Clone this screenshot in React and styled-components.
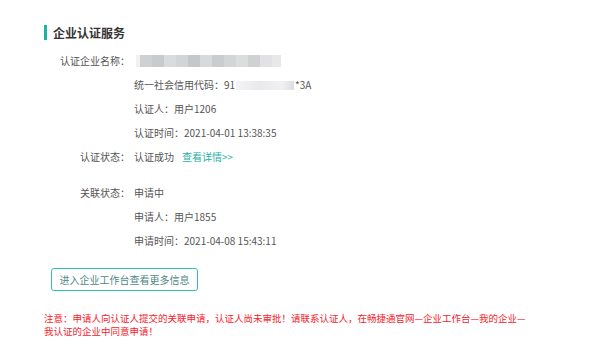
import React from 'react';
import styled, { createGlobalStyle } from 'styled-components';

const GlobalStyle = createGlobalStyle`
body {
  margin: 0;
  background: #fff;
  font-family: "Noto Sans CJK SC", "Noto Sans", sans-serif;
}
`;

const Page = styled.div`
padding: 24px 0 0 44px;
width: 545px;
height: 324px;
background: #fff;
`;

const Title = styled.div`
display: flex;
align-items: center;
height: 16px;
font-size: 12px;
font-weight: bold;
color: #333;
&::before {
  content: "";
  width: 3px;
  height: 15px;
  margin-right: 6px;
  background-color: #1ab3a5;
}
`;

const InfoList = styled.div`
margin-top: 9px;
`;

const Row = styled.div`
display: grid;
grid-template-columns: 86px auto;
column-gap: 4px;
height: 24px;
line-height: 24px;
font-size: 10px;
color: #555;
margin-top: ${(p) => (p.gap ? '12px' : '0')};
`;

const Label = styled.div`
text-align: right;
white-space: nowrap;
`;

const Value = styled.div`
display: flex;
align-items: center;
white-space: nowrap;
`;

const BlurName = styled.span`
display: inline-block;
width: 145px;
height: 12px;
margin-left: 2px;
background: linear-gradient(to right,
  #f1f1f2 0 4px, #cfd0d1 4px 16px, #c9cacb 16px 28px, #dadbdc 28px 40px,
  #d3d4d5 40px 52px, #c5c7c8 52px 64px, #d8d9da 64px 76px, #cbcccd 76px 88px,
  #d4d5d6 88px 100px, #dcdddd 100px 112px, #d0d1d2 112px 124px,
  #e2e2e4 124px 136px, #e8e8ea 136px 145px);
`;

const BlurCode = styled.span`
display: inline-block;
width: 58px;
height: 9px;
margin: 0 1px;
background: linear-gradient(to right, #f4f4f6, #e9e9ec 40%, #f0f0f2 80%, #dcdce0);
`;

const Link = styled.a`
margin-left: 8px;
color: #1ab3a5;
text-decoration: none;
cursor: pointer;
`;

const Button = styled.button`
display: block;
margin: 15px 0 0 7px;
width: 147px;
height: 23px;
padding: 0;
border: 1px solid #2fc2b4;
border-radius: 3px;
background: #fff;
color: #4d8884;
font-family: inherit;
font-size: 10px;
cursor: pointer;
`;

const Notice = styled.p`
margin: 21px 0 0 0;
width: 490px;
font-size: 9.5px;
line-height: 13px;
color: #f5222d;
`;

const App = () => {
	return (
		<Page>
			<GlobalStyle />
			<Title>企业认证服务</Title>
			<InfoList>
				<Row>
					<Label>认证企业名称：</Label>
					<Value><BlurName /></Value>
				</Row>
				<Row>
					<div />
					<Value>统一社会信用代码：91<BlurCode />*3A</Value>
				</Row>
				<Row>
					<div />
					<Value>认证人：用户1206</Value>
				</Row>
				<Row>
					<div />
					<Value>认证时间：2021-04-01 13:38:35</Value>
				</Row>
				<Row>
					<Label>认证状态：</Label>
					<Value>认证成功<Link>查看详情&gt;&gt;</Link></Value>
				</Row>
				<Row gap>
					<Label>关联状态：</Label>
					<Value>申请中</Value>
				</Row>
				<Row>
					<div />
					<Value>申请人：用户1855</Value>
				</Row>
				<Row>
					<div />
					<Value>申请时间：2021-04-08 15:43:11</Value>
				</Row>
			</InfoList>
			<Button>进入企业工作台查看更多信息</Button>
			<Notice>
				注意：申请人向认证人提交的关联申请，认证人尚未审批！请联系认证人，在畅捷通官网—企业工作台—我的企业—我认证的企业中同意申请！
			</Notice>
		</Page>
	);
};

export default App;
